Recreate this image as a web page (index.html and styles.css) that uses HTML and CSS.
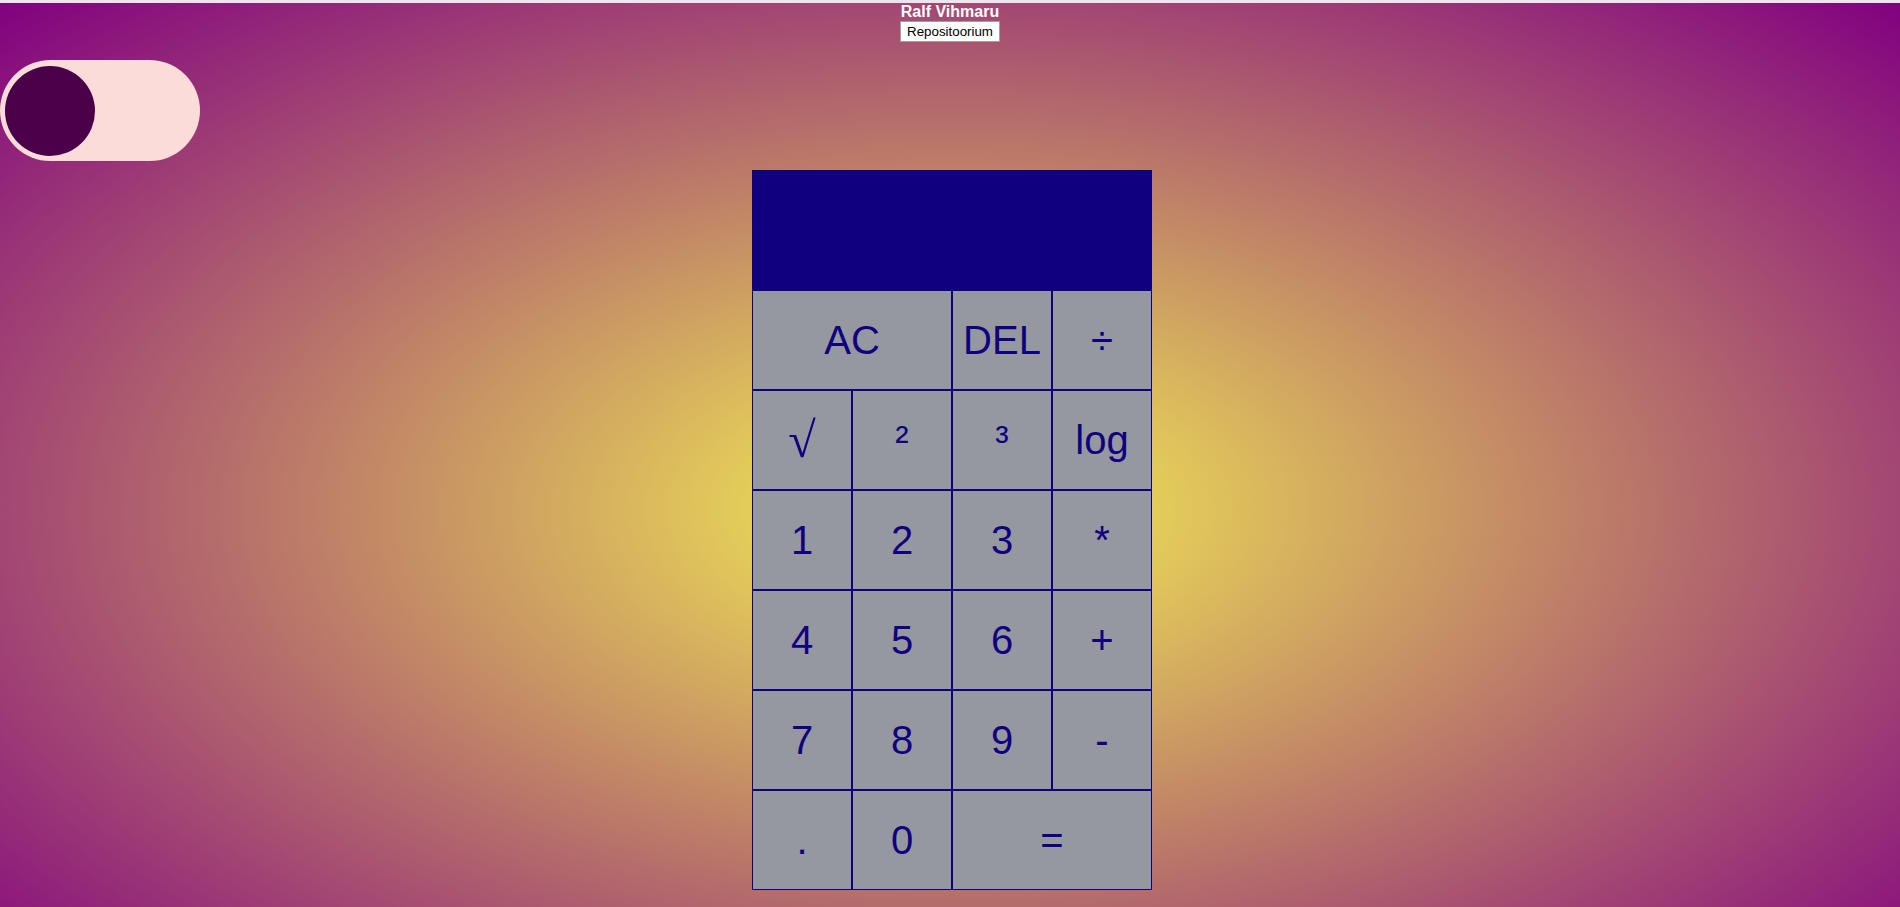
FILE: index.html
```html
<!DOCTYPE html>
<html lang="et">
<head>
<meta charset="utf-8">
<title>Kalkulaator</title>
<link rel="stylesheet" href="styles.css">
</head>
<body>
<div class="topline"></div>
<header class="header">
  <div class="author">Ralf Vihmaru</div>
  <button class="repo-btn">Repositoorium</button>
</header>
<div class="toggle">
  <div class="knob"></div>
</div>
<div class="stage">
<main class="calc">
  <div class="display"></div>
  <button class="key span2">AC</button>
  <button class="key">DEL</button>
  <button class="key">÷</button>
  <button class="key root">√</button>
  <button class="key">²</button>
  <button class="key">³</button>
  <button class="key">log</button>
  <button class="key">1</button>
  <button class="key">2</button>
  <button class="key">3</button>
  <button class="key">*</button>
  <button class="key">4</button>
  <button class="key">5</button>
  <button class="key">6</button>
  <button class="key">+</button>
  <button class="key">7</button>
  <button class="key">8</button>
  <button class="key">9</button>
  <button class="key">-</button>
  <button class="key">.</button>
  <button class="key">0</button>
  <button class="key span2">=</button>
</main>
</div>
</body>
</html>
```

FILE: styles.css
```css
html {
  height: 100%;
  background: radial-gradient(ellipse 1343px 721px at 950px 510px, #e9da57 0%, #e8d658 11%, #800080 100%);
  background-color: #800080;
}

body {
  margin: 0;
  font-family: "Liberation Sans", Arial, sans-serif;
  overflow: hidden;
}

.topline {
  height: 3px;
  background: #ece6ee;
}

.header {
  display: flex;
  flex-direction: column;
  align-items: center;
}

.author {
  color: #fff;
  font-weight: bold;
  font-size: 16px;
  line-height: 18px;
}

.repo-btn {
  font-family: "Liberation Sans", Arial, sans-serif;
  font-size: 13.33px;
  color: #000;
  background: #fdfdfd;
  border: 1px solid #a0a0a0;
  border-radius: 0;
  padding: 2px 6px;
  height: 21px;
  line-height: 15px;
}

.toggle {
  margin-top: 18px;
  width: 200px;
  height: 101px;
  box-sizing: border-box;
  padding: 5px;
  border-radius: 51px;
  background: #fbdcd9;
  display: flex;
  align-items: center;
}

.knob {
  width: 90px;
  height: 90px;
  border-radius: 50%;
  background: #4a0048;
}

.stage {
  display: flex;
  justify-content: center;
  padding-left: 4px;
  margin-top: 9px;
}

.calc {
  display: grid;
  grid-template-columns: repeat(4, 100px);
  grid-template-rows: 120px repeat(6, 100px);
  width: 400px;
}

.display {
  grid-column: 1 / -1;
  background: #10007f;
}

.key {
  box-sizing: border-box;
  background: #95989f;
  border: 1px solid #10007f;
  color: #10007f;
  font-family: "Liberation Sans", Arial, sans-serif;
  font-size: 40px;
  padding: 0;
  margin: 0;
  border-radius: 0;
}

.span2 {
  grid-column: span 2;
}

.root {
  font-family: "Liberation Serif", "DejaVu Serif", serif;
  font-size: 50px;
}
```
